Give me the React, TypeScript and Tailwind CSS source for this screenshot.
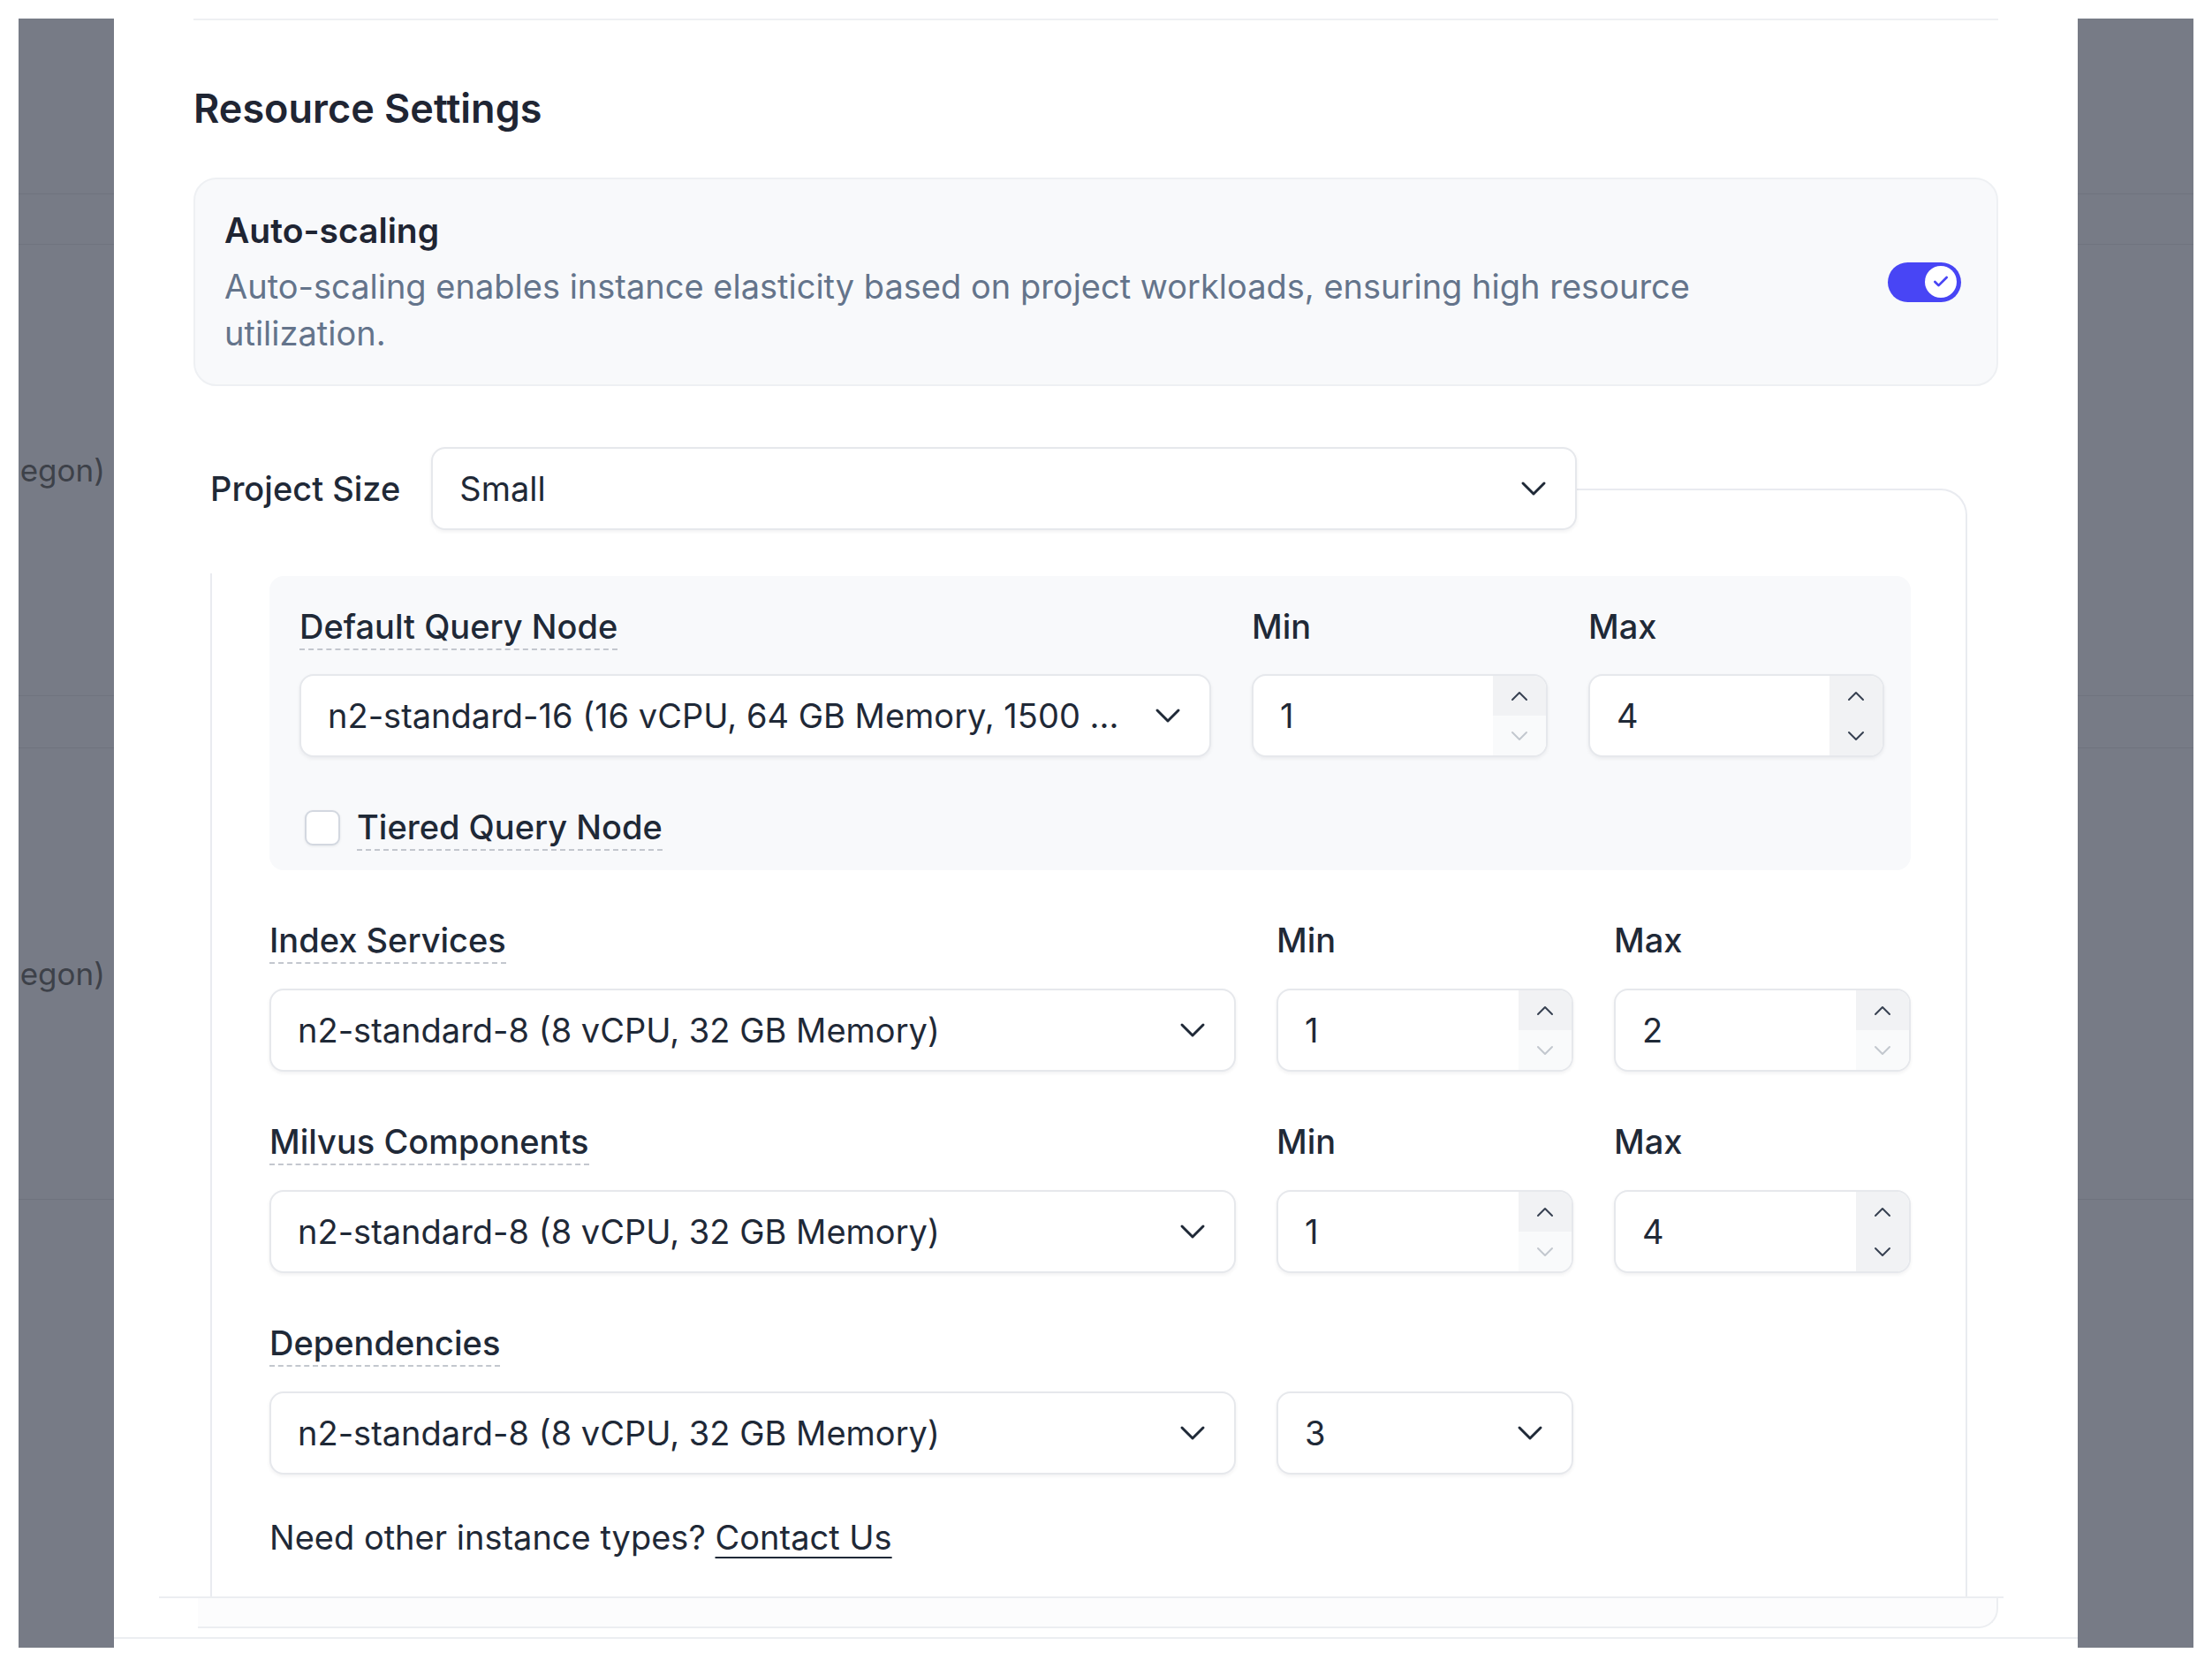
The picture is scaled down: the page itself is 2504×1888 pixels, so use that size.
import { Check } from 'lucide-react';

function ChevronDownIcon({ className = '' }: { className?: string }) {
  return (
    <svg width="30" height="18" viewBox="0 0 30 18" fill="none" className={className}>
      <path d="M3 3l12 12 12-12" stroke="currentColor" strokeWidth="3" strokeLinecap="round" strokeLinejoin="round" />
    </svg>
  );
}

function SpinUp({ className = '' }: { className?: string }) {
  return (
    <svg width="20" height="12" viewBox="0 0 20 12" fill="none" className={className}>
      <path d="M2 10l8-8 8 8" stroke="currentColor" strokeWidth="2" strokeLinecap="round" strokeLinejoin="round" />
    </svg>
  );
}

function SpinDown({ className = '' }: { className?: string }) {
  return (
    <svg width="20" height="12" viewBox="0 0 20 12" fill="none" className={className}>
      <path d="M2 2l8 8 8-8" stroke="currentColor" strokeWidth="2" strokeLinecap="round" strokeLinejoin="round" />
    </svg>
  );
}

function Select({ value }: { value: string }) {
  return (
    <div className="flex h-[94px] items-center justify-between gap-4 rounded-[16px] border-2 border-[#e6e8ec] bg-white pl-[30px] pr-[32px] shadow-[0_2px_4px_rgba(16,24,40,0.06)]">
      <span className="truncate text-[38px] leading-[54px] text-[#1f2937]">{value}</span>
      <ChevronDownIcon className="shrink-0 text-[#1f2937]" />
    </div>
  );
}

function NumberInput({ value, downDisabled }: { value: string; downDisabled?: boolean }) {
  return (
    <div className="flex h-[94px] overflow-hidden rounded-[16px] border-2 border-[#e6e8ec] bg-white shadow-[0_2px_4px_rgba(16,24,40,0.06)]">
      <div className="flex flex-1 items-center pl-[30px] text-[38px] text-[#1f2937]">{value}</div>
      <div className="flex w-[60px] flex-col">
        <div className="flex flex-1 items-center justify-center bg-[#f1f2f4]">
          <SpinUp className="text-[#374151]" />
        </div>
        <div
          className={`flex flex-1 items-center justify-center ${downDisabled ? 'bg-[#f9fafb]' : 'bg-[#f1f2f4]'}`}
        >
          <SpinDown className={downDisabled ? 'text-[#c3c7ce]' : 'text-[#374151]'} />
        </div>
      </div>
    </div>
  );
}

function FieldLabel({ children, dashed }: { children: string; dashed?: boolean }) {
  return (
    <div className="h-[54px]">
      <span
        className={`inline-block text-[38px] font-medium leading-[50px] text-[#1f2937] ${dashed ? 'border-b-2 border-dashed border-[#c3c7ce]' : ''}`}
      >
        {children}
      </span>
    </div>
  );
}

function Strip({ width, text }: { width: string; text?: boolean }) {
  const line = <div className="h-px bg-[#6f737e]" />;
  const label = (
    <div className="flex h-[54px] justify-end whitespace-nowrap pr-[10px] text-[35px] leading-[54px] text-[#3d4149]">
      {text ? 'egon)' : ''}
    </div>
  );
  return (
    <div className={`${width} shrink-0 overflow-hidden bg-[#777b86]`}>
      <div className="h-[198px]" />
      {line}
      <div className="h-[56px]" />
      {line}
      <div className="h-[228px]" />
      {label}
      <div className="h-[228px]" />
      {line}
      <div className="h-[58px]" />
      {line}
      <div className="h-[228px]" />
      {label}
      <div className="h-[228px]" />
      {line}
    </div>
  );
}

export default function App() {
  return (
    <div className="flex h-[1888px] w-[2504px] bg-white px-[21px] pb-[23px] pt-[21px] font-['Inter',sans-serif] antialiased">
      <Strip width="w-[108px]" text />

      {/* Modal */}
      <div className="flex w-[2223px] shrink-0 flex-col bg-white">
        <div className="flex-1 overflow-hidden px-[90px]">
          <div className="border-t-2 border-[#eef0f3]" />

          <h2 className="mt-[73px] text-[45px] font-semibold leading-[54px] text-[#1f2533]">Resource Settings</h2>

          {/* Auto-scaling */}
          <div className="mt-[51px] flex items-center rounded-[26px] border-2 border-[#eef0f3] bg-[#f8f9fb] pb-[31px] pl-[33px] pr-[40px] pt-[31px]">
            <div className="flex-1">
              <div className="text-[39px] font-semibold leading-[54px] text-[#1f2533]">Auto-scaling</div>
              <p className="mt-[10px] max-w-[1780px] text-[38px] leading-[53px] text-[#64748b]">
                Auto-scaling enables instance elasticity based on project workloads, ensuring high resource
                utilization.
              </p>
            </div>
            <div className="flex h-[45px] w-[83px] items-center justify-end rounded-full bg-[#4845f5] pr-[5px]">
              <div className="flex h-[36px] w-[36px] items-center justify-center rounded-full bg-white">
                <Check className="h-[20px] w-[20px] text-[#4845f5]" strokeWidth={3.2} />
              </div>
            </div>
          </div>

          {/* Project Size legend */}
          <div className="relative z-10 mt-[69px] ml-[13px] flex w-fit items-center gap-[35px] bg-white pb-[49px] pl-[6px]">
            <span className="text-[38px] font-medium leading-[54px] text-[#1f2937]">Project Size</span>
            <div className="w-[1297px]">
              <Select value="Small" />
            </div>
          </div>

          {/* Size box */}
          <div className="-mt-[96px] ml-[19px] mr-[35px] rounded-tr-[30px] border-2 border-b-0 border-[#e9ebf0] pb-[200px] pl-[65px] pr-[62px] pt-[97px]">
            {/* Default Query Node */}
            <div className="rounded-[16px] bg-[#f8f9fb] pb-[21px] pl-[34px] pr-[30px] pt-[32px]">
              <div className="grid grid-cols-[1fr_335px_335px] gap-x-[46px] gap-y-[25px]">
                <FieldLabel dashed>Default Query Node</FieldLabel>
                <FieldLabel>Min</FieldLabel>
                <FieldLabel>Max</FieldLabel>
                <Select value="n2-standard-16 (16 vCPU, 64 GB Memory, 1500 ..." />
                <NumberInput value="1" downDisabled />
                <NumberInput value="4" />
              </div>
              <div className="mt-[53px] flex h-[54px] items-center gap-[19px] pl-[6px]">
                <div className="h-[40px] w-[40px] rounded-[9px] border-2 border-[#d3d8e0] bg-white shadow-[0_1px_3px_rgba(16,24,40,0.08)]" />
                <span className="inline-block border-b-2 border-dashed border-[#c3c7ce] text-[38px] font-medium leading-[50px] text-[#1f2937]">
                  Tiered Query Node
                </span>
              </div>
            </div>

            {/* Index Services */}
            <div className="mt-[54px] grid grid-cols-[1fr_336px_336px] gap-x-[46px] gap-y-[26px]">
              <FieldLabel dashed>Index Services</FieldLabel>
              <FieldLabel>Min</FieldLabel>
              <FieldLabel>Max</FieldLabel>
              <Select value="n2-standard-8 (8 vCPU, 32 GB Memory)" />
              <NumberInput value="1" downDisabled />
              <NumberInput value="2" downDisabled />
            </div>

            {/* Milvus Components */}
            <div className="mt-[54px] grid grid-cols-[1fr_336px_336px] gap-x-[46px] gap-y-[26px]">
              <FieldLabel dashed>Milvus Components</FieldLabel>
              <FieldLabel>Min</FieldLabel>
              <FieldLabel>Max</FieldLabel>
              <Select value="n2-standard-8 (8 vCPU, 32 GB Memory)" />
              <NumberInput value="1" downDisabled />
              <NumberInput value="4" />
            </div>

            {/* Dependencies */}
            <div className="mt-[54px] grid grid-cols-[1fr_336px_336px] gap-x-[46px] gap-y-[26px]">
              <FieldLabel dashed>Dependencies</FieldLabel>
              <div />
              <div />
              <Select value="n2-standard-8 (8 vCPU, 32 GB Memory)" />
              <Select value="3" />
              <div />
            </div>

            <p className="mt-[44px] text-[38px] leading-[54px] text-[#1f2937]">
              Need other instance types?{' '}
              <span className="underline decoration-2 underline-offset-[8px]">Contact Us</span>
            </p>
          </div>
        </div>

        {/* Footer edges */}
        <div className="flex h-[58px] flex-col">
          <div className="ml-[51px] w-[2088px] border-t-2 border-[#eceef1]" />
          <div className="ml-[95px] h-[34px] w-[2038px] rounded-br-[22px] border-b-2 border-r-2 border-[#eceef1] bg-[#fcfcfd]" />
          <div className="mt-[10px] border-t-2 border-[#eceef1]" />
        </div>
      </div>

      <Strip width="w-[131px]" />
    </div>
  );
}
